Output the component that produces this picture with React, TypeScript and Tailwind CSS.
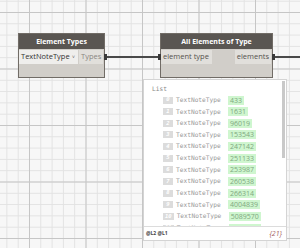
import React from "react";

const values = [
  "433", "1631", "96019", "153543", "247142", "251133", "253987", "260538",
  "266314", "4004839", "5089570", "5100000",
];

function Grid() {
  return (
    <svg className="absolute inset-0" width={300} height={248}>
      <defs>
        <pattern id="minor" x={6.4} y={0.7} width={11.3} height={11.3} patternUnits="userSpaceOnUse">
          <path d="M0 0.5 H11.3 M0.5 0 V11.3" stroke="#e2e2e2" strokeWidth={1} fill="none" />
        </pattern>
        <pattern id="major" x={29} y={12} width={56.5} height={56.5} patternUnits="userSpaceOnUse">
          <path d="M0 0.5 H56.5 M0.5 0 V56.5" stroke="#c6c6c6" strokeWidth={1} fill="none" />
        </pattern>
      </defs>
      <rect width={300} height={248} fill="#f7f7f7" />
      <rect width={300} height={248} fill="url(#minor)" />
      <rect width={300} height={248} fill="url(#major)" />
    </svg>
  );
}

export default function App() {
  return (
    <div className="relative w-[300px] h-[248px] overflow-hidden font-['Open_Sans',sans-serif]">
      <Grid />

      {/* wires */}
      <div className="absolute left-[105px] top-[56px] w-[55px] h-[2px] bg-[#4a4a4a]" />
      <div className="absolute left-[274px] top-[56px] w-[30px] h-[2px] bg-[#4a4a4a]" />

      {/* Element Types node */}
      <div className="absolute left-[18px] top-[33px] w-[87px] h-[45px] flex flex-col bg-[#d1cec9] border border-[#716c66]">
        <div className="h-[15px] bg-[#5a5652] flex items-center justify-center text-white font-bold text-[7px] leading-none">
          Element Types
        </div>
        <div className="flex h-[14px] mt-[1px]">
          <div className="w-[59px] bg-[#efeeec] flex items-center justify-between pl-[2px] pr-[3px] text-[7.5px] text-[#333] leading-none">
            <span>TextNoteType</span>
            <span className="text-[5px] text-[#666]">˅</span>
          </div>
          <div className="flex-1 ml-[1px] mr-[1px] bg-[#e1dfdb] flex items-center pl-[2px] text-[7.5px] text-[#8a8782] leading-none">
            Types
          </div>
        </div>
      </div>
      <div className="absolute left-[104px] top-[54px] w-[3px] h-[6px] bg-[#3a3a3a]" />

      {/* All Elements of Type node */}
      <div className="absolute left-[160px] top-[33px] w-[113px] h-[45px] flex flex-col bg-[#d1cec9] border border-[#716c66]">
        <div className="h-[15px] bg-[#5a5652] flex items-center justify-center text-white font-bold text-[7px] leading-none">
          All Elements of Type
        </div>
        <div className="flex h-[14px] mt-[1px] justify-between">
          <div className="w-[51px] bg-[#e1dfdb] flex items-center pl-[2px] text-[7.5px] text-[#55524e] leading-none">
            element type
          </div>
          <div className="w-[36px] mr-[1px] bg-[#e1dfdb] flex items-center justify-end pr-[2px] text-[7.5px] text-[#55524e] leading-none">
            elements
          </div>
        </div>
      </div>
      <div className="absolute left-[158px] top-[54px] w-[3px] h-[6px] bg-[#3a3a3a]" />
      <div className="absolute left-[272px] top-[54px] w-[3px] h-[6px] bg-[#3a3a3a]" />

      {/* Preview panel */}
      <div className="absolute left-[143px] top-[79px] w-[144px] h-[162px] flex flex-col bg-white border border-[#d4d4d4]">
        <div className="relative flex-1 overflow-hidden">
          <div className="font-['DejaVu_Sans_Mono',monospace] text-[6.2px] text-[#888] leading-none pl-[8px] pt-[6px]">
            List
          </div>
          <div className="flex flex-col pt-[2px]">
            {values.map((v, i) => (
              <div key={i} className="flex items-center h-[11.65px] pl-[19px]">
                <div className="min-w-[10px] h-[7px] px-[2px] bg-[#dcdcdc] flex items-center justify-center font-['DejaVu_Sans_Mono',monospace] italic font-bold text-[5.5px] text-white leading-none">
                  {i}
                </div>
                <div className="ml-[3px] w-[45px] font-['DejaVu_Sans_Mono',monospace] text-[6.2px] text-[#9a9a9a] leading-none">
                  TextNoteType
                </div>
                <div className="ml-[7px] h-[9px] px-[2px] bg-[#cff6cf] flex items-center text-[7px] text-[#7fa87f] leading-none">
                  {v}
                </div>
              </div>
            ))}
          </div>
          <div className="absolute right-[1px] top-[1px] w-[3px] h-[77px] bg-[#c9c9c9]" />
        </div>
        <div className="h-[14px] border-t border-[#dcdcdc] flex items-center justify-between px-[2px] bg-white">
          <span className="text-[5px] font-bold text-[#444] leading-none">@L2 @L1</span>
          <span className="text-[7px] italic text-[#a5615d] leading-none pr-[2px]">{"{21}"}</span>
        </div>
      </div>
    </div>
  );
}
